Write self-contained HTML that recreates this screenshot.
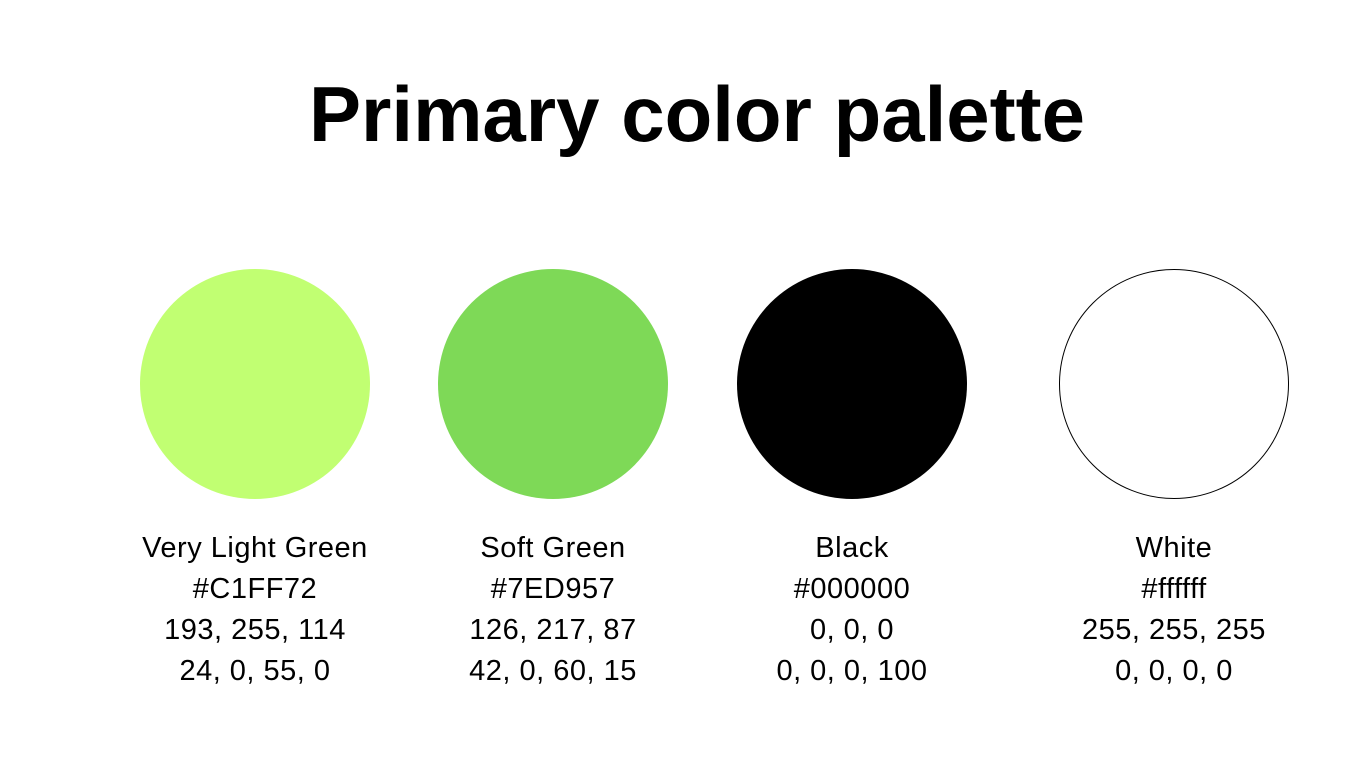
<!DOCTYPE html>
<html><head><style>
body{margin:0;width:1366px;height:768px;background:#fff;position:relative;overflow:hidden;font-family:"Liberation Sans",sans-serif;}
h1{position:absolute;top:66px;left:0;width:1394px;text-align:center;margin:0;font-size:78px;font-weight:bold;line-height:96px;color:#000;}
.c{position:absolute;top:269px;width:230px;height:230px;border-radius:50%;box-sizing:border-box;}
.t{position:absolute;top:528px;width:340px;text-align:center;font-size:29px;letter-spacing:0.5px;line-height:41px;color:#000;}
</style></head><body>
<h1>Primary color palette</h1>
<div class="c" style="left:140px;background:#C1FF72"></div>
<div class="c" style="left:438px;background:#7ED957"></div>
<div class="c" style="left:737px;background:#000"></div>
<div class="c" style="left:1059px;border:1px solid #000"></div>
<div class="t" style="left:85px">Very Light Green<br>#C1FF72<br>193, 255, 114<br>24, 0, 55, 0</div>
<div class="t" style="left:383px">Soft Green<br>#7ED957<br>126, 217, 87<br>42, 0, 60, 15</div>
<div class="t" style="left:682px">Black<br>#000000<br>0, 0, 0<br>0, 0, 0, 100</div>
<div class="t" style="left:1004px">White<br>#ffffff<br>255, 255, 255<br>0, 0, 0, 0</div>
</body></html>
